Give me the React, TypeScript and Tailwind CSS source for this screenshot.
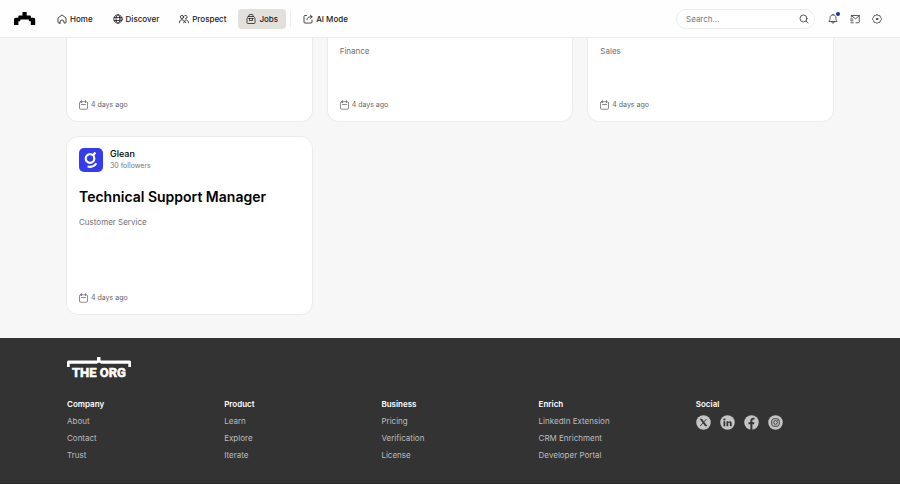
import type { ReactNode, SVGProps } from "react";
import clsx from "clsx";

interface Job {
  company?: string;
  followers?: string;
  title?: string;
  department?: string;
  posted: string;
}

const recentJobs: Job[] = [
  { posted: "4 days ago" },
  { department: "Finance", posted: "4 days ago" },
  { department: "Sales", posted: "4 days ago" },
];

const footerColumns = [
  { title: "Company", links: ["About", "Contact", "Trust"] },
  { title: "Product", links: ["Learn", "Explore", "Iterate"] },
  { title: "Business", links: ["Pricing", "Verification", "License"] },
  { title: "Enrich", links: ["LinkedIn Extension", "CRM Enrichment", "Developer Portal"] },
];

// ── Icons
function Icon({ children, ...props }: SVGProps<SVGSVGElement>) {
  return (
    <svg
      width="10"
      height="10"
      viewBox="0 0 20 20"
      fill="none"
      stroke="currentColor"
      strokeWidth="1.6"
      strokeLinecap="round"
      strokeLinejoin="round"
      aria-hidden="true"
      className="shrink-0"
      {...props}
    >
      {children}
    </svg>
  );
}

const HomeIcon = () => (
  <Icon>
    <path d="M6 18H3.500A1.500 1.500 0 0 1 2 16.500V8.200L10 1.800l8 6.400v8.300a1.500 1.500 0 0 1-1.500 1.500H14v-2a4 4 0 0 0-8 0V18Z" />
  </Icon>
);

const GlobeIcon = () => (
  <Icon>
    <circle cx="10" cy="10" r="8.4" />
    <ellipse cx="10" cy="10" rx="4" ry="8.4" />
    <path d="M2.500 7h15M2.500 13h15" />
  </Icon>
);

const PeopleIcon = () => (
  <Icon>
    <circle cx="6" cy="6" r="3.2" />
    <path d="M1 17.500V16a5 5 0 0 1 5-4.500c3 0 4.500 2 6 4l1.500 2" />
    <path d="M11.500 3.200a3.200 3.200 0 1 1 1.500 6" />
    <path d="M9.500 17.500c.8-3.500 2.500-5.500 5-5.500 2.500 0 4 2 4.500 5.500" />
  </Icon>
);

const BriefcaseIcon = () => (
  <Icon strokeWidth="1.5">
    <path d="M6 5V3a2 2 0 0 1 2-2h4a2 2 0 0 1 2 2v2" />
    <path d="M4.500 5h11L18 9v8a2 2 0 0 1-2 2H4a2 2 0 0 1-2-2V9l2.500-4Z" />
    <path d="M5.500 9h9M7 9v4h6V9" />
  </Icon>
);

const AiIcon = () => (
  <Icon>
    <path d="M7 3H4a2 2 0 0 0-2 2v11a2 2 0 0 0 2 2h12a2 2 0 0 0 2-2v-4" />
    <path d="M8 11.500c0-4.500 3-6 10-6M14.500 2l3.800 3.500-3.800 3.500" />
  </Icon>
);

const SearchIcon = () => (
  <Icon>
    <circle cx="9" cy="9" r="7" />
    <path d="m14.200 14.200 3.800 3.800" />
  </Icon>
);

const BellIcon = () => (
  <Icon>
    <path d="M10 1.500c-3.600 0-5.700 2.500-5.700 5.800 0 3.700-1 5.200-2.500 7.700h16.400c-1.500-2.500-2.500-4-2.500-7.700 0-3.300-2.100-5.800-5.700-5.800Z" />
    <path d="M7.300 15.500a2.700 2.700 0 0 0 5.400 0" />
  </Icon>
);

const MailIcon = () => (
  <Icon>
    <path d="M2.500 6V3h16v13a1.500 1.500 0 0 1-1.500 1.500h-5" />
    <path d="m3 3.500 8 6 7.500-6" />
    <path d="M1 10h4.500M1.500 13.500H6M6.500 17.500H2" />
  </Icon>
);

const SettingsIcon = () => (
  <Icon>
    <path d="M10 1.200 12.600 3l3.200.2.900 3.100 2.100 2.400v2.600l-2.100 2.400-.9 3.100-3.200.2-2.600 1.800L7.400 17l-3.200-.2-.9-3.100-2.100-2.400V8.700l2.100-2.400.9-3.100L7.400 3 10 1.200Z" />
    <circle cx="10" cy="10" r="1.500" strokeWidth="2" />
  </Icon>
);

const CalendarIcon = () => (
  <Icon strokeWidth="1.5">
    <rect x="1" y="3.500" width="16" height="15" rx="2.5" />
    <path d="M5 1.200v4M13 1.200v4M5 9h8" />
  </Icon>
);

const BrandMark = () => (
  <svg width="22" height="14" viewBox="0 0 22 14" fill="currentColor" aria-hidden="true">
    <path d="M8.500 0h4.200v3.500h3.200a1 1 0 0 1 1 1v1.300h2.600a1.700 1.700 0 0 1 1.700 1.700V13h-4.400V9.300h-1a1 1 0 0 1-1-1v-.8H6.400v.8a1 1 0 0 1-1 1h-1V13H0V7.500a1.700 1.700 0 0 1 1.700-1.700h2.600V4.500a1 1 0 0 1 1-1h3.200Z" />
  </svg>
);

const GleanLogo = () => (
  <svg width="24" height="24" viewBox="0 0 24 24" fill="none" aria-hidden="true">
    <rect width="24" height="24" rx="5" fill="#343ced" />
    <circle cx="11" cy="10.500" r="4.300" stroke="#fff" strokeWidth="2.200" />
    <path d="m14 7.500 2.300-3" stroke="#fff" strokeWidth="2.200" />
    <path d="M8.500 18.500c3.600.8 7-.2 8.800-3.200" stroke="#fff" strokeWidth="2.200" />
  </svg>
);

const OrgLogo = () => (
  <svg width="65" height="22" viewBox="0 0 65 22" role="img" aria-label="The Org">
    <path
      fill="#fff"
      d="M30 0h3.500v3.500H62.500A1.500 1.500 0 0 1 64 5v5h-2.700V6.700H34.500L32 5.500l-2.500 1.200H2.700V10H0V5a1.500 1.500 0 0 1 1.500-1.500H30Z"
    />
    <text
      x="32"
      y="20"
      textAnchor="middle"
      fill="#fff"
      stroke="#fff"
      strokeWidth="0.6"
      fontFamily="Roboto, 'Liberation Sans', sans-serif"
      fontWeight="700"
      fontSize="13"
    >
      THE ORG
    </text>
  </svg>
);

// ── Header
function NavLink({ icon, label, active }: { icon: ReactNode; label: string; active?: boolean }) {
  return (
    <a
      href="#"
      aria-current={active ? "page" : undefined}
      className={clsx(
        "flex h-5 items-center gap-[3px] rounded px-2 text-[8px] font-medium text-[#191919]",
        active && "bg-[#e3dfdb]"
      )}
    >
      {icon}
      {label}
    </a>
  );
}

function Header() {
  return (
    <header className="flex h-[38px] items-center justify-between border-b border-[#ececec] bg-[#fefefe] pr-[18px] pl-3.5">
      <div className="flex items-center">
        <a href="#" aria-label="The Org home" className="mr-[13px] text-black">
          <BrandMark />
        </a>
        <nav className="flex items-center gap-1">
          <NavLink icon={<HomeIcon />} label="Home" />
          <NavLink icon={<GlobeIcon />} label="Discover" />
          <NavLink icon={<PeopleIcon />} label="Prospect" />
          <NavLink icon={<BriefcaseIcon />} label="Jobs" active />
          <span className="h-4 w-px bg-[#ebebeb]" />
          <NavLink icon={<AiIcon />} label="AI Mode" />
        </nav>
      </div>
      <div className="flex items-center gap-3 text-[#333]">
        <label className="mr-px flex h-5 w-[139px] items-center rounded-full border border-[#ebebeb] bg-white pr-[5px] pl-[9px]">
          <input
            type="search"
            aria-label="Search"
            placeholder="Search..."
            className="min-w-0 flex-1 text-[8px] outline-none placeholder:text-[#777]"
          />
          <SearchIcon />
        </label>
        <button type="button" aria-label="Notifications" className="relative">
          <BellIcon />
          <span className="absolute -top-0.5 -right-0.5 size-1 rounded-full bg-[#1c2f9c]" />
        </button>
        <button type="button" aria-label="Messages">
          <MailIcon />
        </button>
        <button type="button" aria-label="Settings">
          <SettingsIcon />
        </button>
      </div>
    </header>
  );
}

// ── Cards
function Posted({ children }: { children: ReactNode }) {
  return (
    <p className="mt-auto flex items-center gap-0.5 text-[7px] leading-[10px] text-[#666]">
      <CalendarIcon />
      {children}
    </p>
  );
}

function RecentCard({ job }: { job: Job }) {
  return (
    <article className="flex h-[84px] flex-col rounded-b-xl border border-t-0 border-[#ebebeb] bg-white px-3 pt-[7px] pb-[11px]">
      {job.department && <p className="text-[8px] leading-3 text-[#707070]">{job.department}</p>}
      <Posted>{job.posted}</Posted>
    </article>
  );
}

function JobCard({ job }: { job: Job }) {
  return (
    <article className="flex h-[179px] flex-col rounded-xl border border-[#ebebeb] bg-white px-3 pt-[11px] pb-[11px]">
      <div className="flex items-center gap-[7px]">
        <GleanLogo />
        <div>
          <p className="text-[9px] leading-3 font-medium text-black">{job.company}</p>
          <p className="text-[7px] leading-3 text-[#777]">{job.followers}</p>
        </div>
      </div>
      <h2 className="mt-[15px] text-[14px] leading-5 font-semibold text-black">{job.title}</h2>
      <p className="mt-[9px] text-[8px] leading-3 text-[#707070]">{job.department}</p>
      <Posted>{job.posted}</Posted>
    </article>
  );
}

// ── Footer
function SocialLink({ label, children }: { label: string; children: ReactNode }) {
  return (
    <a href="#" aria-label={label} className="text-[#333]">
      <svg width="15" height="15" viewBox="0 0 30 30" fill="none" aria-hidden="true">
        <circle cx="15" cy="15" r="14.500" fill="#c4c4c4" />
        {children}
      </svg>
    </a>
  );
}

function Footer() {
  return (
    <footer className="border-b border-[#282828] bg-[#333] pt-[19px] pb-[19px]">
      <div className="mx-auto max-w-3xl px-px">
        <OrgLogo />
        <div className="mt-[17px] grid grid-cols-5 gap-5 text-[8px] leading-[17px]">
          {footerColumns.map((column) => (
            <div key={column.title}>
              <h3 className="font-semibold text-white">{column.title}</h3>
              <ul className="text-[#bdbdbd]">
                {column.links.map((link) => (
                  <li key={link}>
                    <a href="#">{link}</a>
                  </li>
                ))}
              </ul>
            </div>
          ))}
          <div>
            <h3 className="font-semibold text-white">Social</h3>
            <div className="mt-0.5 flex gap-[9px]">
              <SocialLink label="X">
                <path d="M8 8h3.500l10.500 14h-3.500L8 8Z" fill="currentColor" stroke="currentColor" />
                <path d="M21 8 8.500 22" stroke="currentColor" strokeWidth="1.8" />
              </SocialLink>
              <SocialLink label="LinkedIn">
                <path
                  d="M7 12.500h3.500V22.500H7zM13 12.500h3v1.400c1.800-2.500 7.300-2.300 7.300 2.300v6.300h-3.500v-5.500c0-2.800-3.300-2.600-3.300 0v5.500H13z"
                  fill="currentColor"
                />
                <circle cx="8.800" cy="9" r="2.100" fill="currentColor" />
              </SocialLink>
              <SocialLink label="Facebook">
                <path
                  d="M12.800 30V18.500H9v-4h3.800v-3c0-4 2.300-6 5.700-6 1.300 0 2.500.2 2.500.2v3.500h-2c-1.500 0-2.200.9-2.200 2.200v3.100h4l-.7 4h-3.300V30Z"
                  fill="currentColor"
                />
              </SocialLink>
              <SocialLink label="Instagram">
                <rect x="7.500" y="7.500" width="15" height="15" rx="4.500" stroke="currentColor" strokeWidth="1.8" />
                <circle cx="15" cy="15" r="3.700" stroke="currentColor" strokeWidth="1.8" />
                <circle cx="19.500" cy="10.500" r="1" fill="currentColor" />
              </SocialLink>
            </div>
          </div>
        </div>
      </div>
    </footer>
  );
}

export default function App() {
  return (
    <div className="bg-[#f7f7f7] font-['Inter',sans-serif]">
      <Header />
      <main className="mx-auto grid max-w-3xl grid-cols-3 gap-3.5 pb-[23px]">
        {recentJobs.map((job, i) => (
          <RecentCard key={i} job={job} />
        ))}
        <JobCard
          job={{
            company: "Glean",
            followers: "30 followers",
            title: "Technical Support Manager",
            department: "Customer Service",
            posted: "4 days ago",
          }}
        />
      </main>
      <Footer />
    </div>
  );
}
